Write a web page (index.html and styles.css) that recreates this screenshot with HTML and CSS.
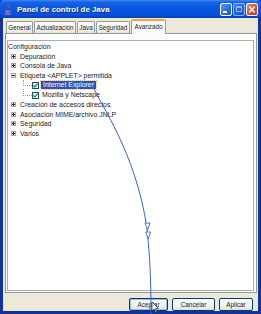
FILE: index.html
```html
<!DOCTYPE html>
<html lang="es">
<head>
<meta charset="utf-8">
<title>Panel de control de Java</title>
<link rel="stylesheet" href="styles.css">
</head>
<body>
<div class="window">
  <div class="titlebar">
    <svg class="app-icon" width="8" height="11" viewBox="0 0 8 11">
      <path d="M4 0.5 C2.5 2 5.5 3 4 4.8" fill="none" stroke="#d0402a" stroke-width="1"/>
      <path d="M5.6 1.2 C4.6 2.4 6.4 3 5.4 4.4" fill="none" stroke="#d0402a" stroke-width="0.8"/>
      <path d="M0.8 6 H6.2 L5.6 9.5 H1.4 Z" fill="#8a6fd0" stroke="#5a3fa0" stroke-width="0.6"/>
      <path d="M6.2 6.6 C8 6.6 8 8.6 5.9 8.6" fill="none" stroke="#8a6fd0" stroke-width="0.8"/>
      <path d="M0.5 10.3 H7" stroke="#b09ae0" stroke-width="0.8"/>
    </svg>
    <span class="title">Panel de control de Java</span>
    <div class="controls">
      <span class="cbtn cmin"><i></i></span>
      <span class="cbtn cmax"><i></i></span>
      <span class="cbtn cclose">
        <svg width="12" height="13" viewBox="0 0 12 13"><path d="M3.3 3.5 L8.7 9.5 M8.7 3.5 L3.3 9.5" stroke="#fff" stroke-width="1.6"/></svg>
      </span>
    </div>
  </div>
  <div class="frame">
    <div class="tabs">
      <div class="tab t-general">General</div>
      <div class="tab t-act">Actualización</div>
      <div class="tab t-java">Java</div>
      <div class="tab t-seg">Seguridad</div>
      <div class="tab t-adv active">Avanzado</div>
    </div>
    <div class="panel">
      <div class="tree">
        <div class="row root">Configuración</div>
        <div class="row"><span class="exp"><i class="h"></i><i class="v"></i></span>Depuración</div>
        <div class="row"><span class="exp"><i class="h"></i><i class="v"></i></span>Consola de Java</div>
        <div class="row"><span class="exp"><i class="h"></i></span>Etiqueta &lt;APPLET&gt; permitida</div>
        <div class="row leaf first"><span class="conn"></span><span class="cb"><svg width="7" height="7" viewBox="0 0 7 7"><path d="M1.3 3.4 L2.8 5 L5.8 1.6" fill="none" stroke="#21a121" stroke-width="1.3"/></svg></span><span class="label sel">Internet Explorer</span></div>
        <div class="row leaf last"><span class="conn"></span><span class="cb"><svg width="7" height="7" viewBox="0 0 7 7"><path d="M1.3 3.4 L2.8 5 L5.8 1.6" fill="none" stroke="#21a121" stroke-width="1.3"/></svg></span><span class="label">Mozilla y Netscape</span></div>
        <div class="row"><span class="exp"><i class="h"></i><i class="v"></i></span>Creación de accesos directos</div>
        <div class="row"><span class="exp"><i class="h"></i><i class="v"></i></span>Asociación MIME/archivo JNLP</div>
        <div class="row"><span class="exp"><i class="h"></i><i class="v"></i></span>Seguridad</div>
        <div class="row"><span class="exp"><i class="h"></i><i class="v"></i></span>Varios</div>
      </div>
    </div>
    <div class="buttons">
      <button class="btn default b-ok">Aceptar</button>
      <button class="btn b-cancel">Cancelar</button>
      <button class="btn b-apply">Aplicar</button>
    </div>
  </div>
  <svg class="annotation" width="261" height="314" viewBox="0 0 261 314">
    <path d="M93 86 C100 105 135 150 147 228 C149 250 151 270 151 314" fill="none" stroke="#3a5ee0" stroke-width="1"/>
    <path d="M145 223 L150 223 L147.6 230 Z" fill="#fff" stroke="#3a5ee0" stroke-width="0.9"/>
    <path d="M145.6 232 L150.6 232 L148.3 239 Z" fill="#fff" stroke="#3a5ee0" stroke-width="0.9"/>
    <path d="M152 302 L152 311 L154.2 309 L155.8 312.5 L157 312 L155.5 308.6 L158.4 308.4 Z" fill="#fff" stroke="#000" stroke-width="0.6"/>
  </svg>
</div>
</body>
</html>
```
FILE: styles.css
```css
html, body {
  margin: 0;
  padding: 0;
}
body {
  width: 261px;
  height: 314px;
  overflow: hidden;
  font-family: "Liberation Sans", Arial, sans-serif;
  background: #ffffff;
}
.window {
  position: relative;
  width: 261px;
  height: 314px;
  display: flex;
  flex-direction: column;
  background: #12339e;
  box-sizing: border-box;
}
.titlebar {
  height: 18px;
  flex: none;
  display: flex;
  align-items: center;
  padding-left: 4px;
  background: linear-gradient(#3f8cf3 0%, #1663e6 12%, #0a57e0 45%, #0752db 80%, #0640b8 100%);
  border-radius: 4px 4px 0 0;
}
.app-icon {
  flex: none;
  margin-top: 1px;
}
.title {
  margin-left: 5px;
  color: #ffffff;
  font-weight: bold;
  font-size: 7.9px;
  text-shadow: 1px 1px 0 #0a2a8a;
  white-space: nowrap;
}
.controls {
  margin-left: auto;
  margin-right: 3px;
  display: flex;
  gap: 1px;
}
.cbtn {
  position: relative;
  width: 12px;
  height: 13px;
  box-sizing: border-box;
  border: 1px solid #ffffff;
  border-radius: 2px;
  background: linear-gradient(135deg, #5f9cf7 0%, #2a6fe8 55%, #1c58d4 100%);
}
.cmin i {
  position: absolute;
  left: 2px;
  bottom: 2px;
  width: 4px;
  height: 2px;
  background: #ffffff;
}
.cmax {
  opacity: 0.55;
}
.cmax i {
  position: absolute;
  left: 2px;
  top: 2px;
  width: 6px;
  height: 6px;
  border: 1px solid #ffffff;
  border-top-width: 2px;
  box-sizing: border-box;
}
.cclose {
  background: linear-gradient(135deg, #ef8f72 0%, #e0502e 50%, #c63a1c 100%);
}
.cclose svg {
  position: absolute;
  left: -1px;
  top: -1px;
}
.frame {
  flex: 1;
  margin: 0 3px 3px 3px;
  background: #ece9d8;
  display: flex;
  flex-direction: column;
  min-height: 0;
}
.tabs {
  height: 15px;
  flex: none;
  display: flex;
  align-items: flex-end;
  padding-left: 3px;
  position: relative;
  z-index: 2;
}
.tab {
  height: 12px;
  box-sizing: border-box;
  border: 1px solid #919b9c;
  border-bottom: 0;
  border-radius: 2px 2px 0 0;
  background: linear-gradient(#ffffff, #f3f2ea 70%, #e6e4d6);
  font-size: 6.3px;
  color: #1a1a1a;
  display: flex;
  align-items: center;
  justify-content: center;
  white-space: nowrap;
  margin-right: 1px;
}
.t-general { width: 27px; }
.t-act { width: 42px; }
.t-java { width: 18px; }
.t-seg { width: 34px; }
.t-adv { width: 35px; }
.tab.active {
  height: 15px;
  margin-bottom: -1px;
  background: #fcfcfe;
  border-top: 2px solid #f0a73a;
  padding-bottom: 2px;
}
.panel {
  flex: 1;
  margin-left: 2px;
  margin-right: 1px;
  border: 1px solid #919b9c;
  background: #fbfbf8;
  padding: 6px 2px 1px 1px;
  display: flex;
  min-height: 0;
}
.tree {
  flex: 1;
  background: #ffffff;
  border: 1px solid #a5acb2;
  padding-top: 1px;
  font-size: 6.9px;
  color: #1a1a1a;
}
.row {
  position: relative;
  height: 9.5px;
  display: flex;
  align-items: center;
  white-space: nowrap;
  padding-left: 3px;
}
.row.root {
  padding-left: 0;
}
.exp {
  position: relative;
  width: 5px;
  height: 5px;
  box-sizing: border-box;
  border: 1px solid #a0a4a8;
  background: #f4f4f0;
  margin-right: 4px;
  flex: none;
}
.exp .h {
  position: absolute;
  left: 0;
  top: 1px;
  width: 3px;
  height: 1px;
  background: #222222;
}
.exp .v {
  position: absolute;
  left: 1px;
  top: 0;
  width: 1px;
  height: 3px;
  background: #222222;
}
.row.leaf {
  height: 10px;
  padding-left: 24px;
}
.conn {
  position: absolute;
  left: 15px;
  top: 0;
  width: 8px;
  height: 5px;
  border-left: 1px dotted #a0a0a0;
  border-bottom: 1px dotted #a0a0a0;
}
.row.last .conn {
  top: -1px;
  height: 6px;
}
.cb {
  width: 7px;
  height: 7px;
  box-sizing: border-box;
  border: 1px solid #1c5180;
  background: linear-gradient(135deg, #dcdcd6, #ffffff);
  flex: none;
  position: relative;
}
.cb svg {
  position: absolute;
  left: -1px;
  top: -1px;
}
.label {
  margin-left: 2px;
  padding: 0 1px;
  line-height: 8px;
}
.label.sel {
  background: #2a52b8;
  color: #ffffff;
  outline: 1px dotted #f0c070;
  padding: 0 2px;
}
.buttons {
  height: 13px;
  margin-top: 5px;
  flex: none;
  display: flex;
  justify-content: flex-end;
  gap: 4px;
  padding-right: 5px;
}
.btn {
  height: 13px;
  box-sizing: border-box;
  border: 1px solid #003c74;
  border-radius: 2px;
  background: linear-gradient(#ffffff, #f4f3ee 60%, #e3e1d6);
  font-family: "Liberation Sans", Arial, sans-serif;
  font-size: 6.4px;
  color: #1a1a1a;
  padding: 0;
  margin: 0;
}
.btn.default {
  box-shadow: inset 0 0 0 1px #98b8ea;
}
.b-ok { width: 39px; }
.b-cancel { width: 43px; }
.b-apply { width: 34px; }
.annotation {
  position: absolute;
  left: 0;
  top: 0;
  pointer-events: none;
}
```
